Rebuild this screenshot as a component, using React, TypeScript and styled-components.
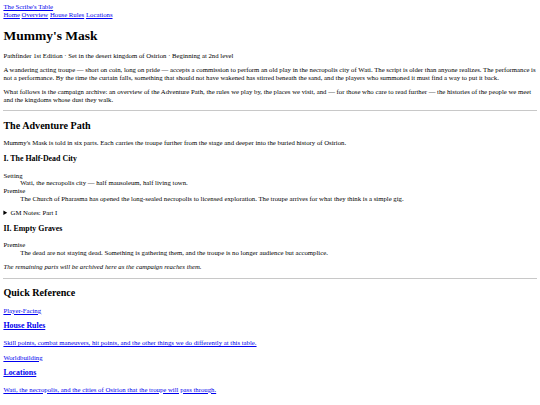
import styled, { createGlobalStyle } from 'styled-components';

// the page is a 1280px-wide document shown at 540px, so every default size is scaled by 0.421875
const GlobalStyle = createGlobalStyle`
  body {
    margin: 3.4px;
    font-family: "Liberation Serif", "Times New Roman", serif;
    font-size: 6.75px;
    line-height: 1.13;
    color: #000;
    background: #fff;
  }
  a {
    color: #0000ee;
  }
`;

const Masthead = styled.header`
  display: flex;
  flex-direction: column;
  align-items: flex-start;
`;

const Nav = styled.nav`
  display: flex;
  gap: 1.7px;
`;

const Title = styled.h1`
  font-size: 13.5px;
  margin: 9px 0;
`;

const Section = styled.h2`
  font-size: 10.1px;
  margin: 8.4px 0;
`;

const Part = styled.h3`
  font-size: 7.9px;
  margin: 7.9px 0;
`;

const Para = styled.p`
  margin: 6.75px 0;
`;

const Rule = styled.hr`
  margin: 3.4px 0;
  border: none;
  border-top: 1px solid #c8c8c8;
`;

const Facts = styled.dl`
  margin: 6.75px 0;
  dd {
    margin-left: 16.9px;
  }
`;

const Notes = styled.details`
  summary {
    cursor: pointer;
  }
`;

const Card = styled.a`
  display: block;
  h3 {
    font-size: 7.9px;
    margin: 7.9px 0;
  }
  p {
    margin: 6.75px 0;
  }
`;

const App = () => {
  return (
    <>
      <GlobalStyle />
      <Masthead>
        <a href='#'>The Scribe's Table</a>
        <Nav>
          <a href='#'>Home</a>
          <a href='#'>Overview</a>
          <a href='#'>House Rules</a>
          <a href='#'>Locations</a>
        </Nav>
      </Masthead>
      <main>
        <Title>Mummy's Mask</Title>
        <Para>Pathfinder 1st Edition · Set in the desert kingdom of Osirion · Beginning at 2nd level</Para>
        <Para>
          A wandering acting troupe — short on coin, long on pride — accepts a commission to perform an old play in the
          necropolis city of Wati. The script is older than anyone realizes. The performance is not a performance. By the
          time the curtain falls, something that should not have wakened has stirred beneath the sand, and the players who
          summoned it must find a way to put it back.
        </Para>
        <Para>
          What follows is the campaign archive: an overview of the Adventure Path, the rules we play by, the places we
          visit, and — for those who care to read further — the histories of the people we meet and the kingdoms whose dust
          they walk.
        </Para>
        <Rule />
        <Section>The Adventure Path</Section>
        <Para>
          Mummy's Mask is told in six parts. Each carries the troupe further from the stage and deeper into the buried
          history of Osirion.
        </Para>
        <Part>I. The Half-Dead City</Part>
        <Facts>
          <dt>Setting</dt>
          <dd>Wati, the necropolis city — half mausoleum, half living town.</dd>
          <dt>Premise</dt>
          <dd>
            The Church of Pharasma has opened the long-sealed necropolis to licensed exploration. The troupe arrives for
            what they think is a simple gig.
          </dd>
        </Facts>
        <Notes>
          <summary>GM Notes: Part I</summary>
        </Notes>
        <Part>II. Empty Graves</Part>
        <Facts>
          <dt>Premise</dt>
          <dd>
            The dead are not staying dead. Something is gathering them, and the troupe is no longer audience but
            accomplice.
          </dd>
        </Facts>
        <Para>
          <em>The remaining parts will be archived here as the campaign reaches them.</em>
        </Para>
        <Rule />
        <Section>Quick Reference</Section>
        <Card href='#'>
          <p>Player-Facing</p>
          <h3>House Rules</h3>
          <p>Skill points, combat maneuvers, hit points, and the other things we do differently at this table.</p>
        </Card>
        <Card href='#'>
          <p>Worldbuilding</p>
          <h3>Locations</h3>
          <p>Wati, the necropolis, and the cities of Osirion that the troupe will pass through.</p>
        </Card>
      </main>
    </>
  );
};

export default App;
